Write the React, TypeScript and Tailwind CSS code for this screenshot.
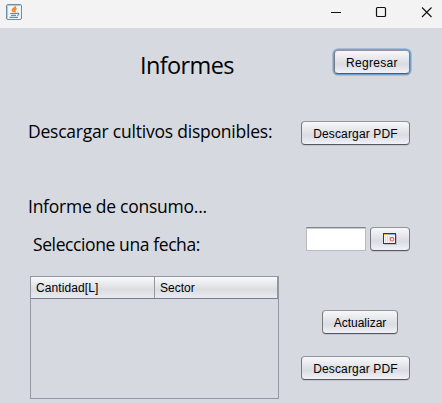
import type { ReactNode } from "react";
import { clsx } from "clsx";

function JavaIcon() {
  return (
    <svg width="16" height="16" viewBox="0 0 16 16" fill="none">
      <rect x="0.5" y="0.5" width="15" height="15" rx="1.5" fill="#f1f5f8" stroke="#6d8da4" />
      <path d="M1.5 14.5V1.5h13" stroke="#b4c8d6" />
      <path d="M9.400 2.200C9.800 4 6 4.600 6.500 6.400c.2.700.9 1 1.100 1.900M10.600 4.400C8.800 5.200 8.100 6 8.800 6.900c.3.500.2 1-.2 1.500" stroke="#f08a24" strokeWidth="1.700" />
      <path d="M4 9.500h6.800M5 11.400h5M10.800 9.300c2.800-.7 2.500 1.600.4 2.100M3.500 13.400h8.500" stroke="#6f8ca2" strokeWidth="1.200" />
    </svg>
  );
}

function CalendarIcon() {
  return (
    <svg width="14" height="12" viewBox="0 0 14 12" fill="none">
      <path d="M1.500 11.500h12V1.500" stroke="#c4bfc0" />
      <rect x="0.500" y="0.500" width="12" height="10" fill="#f4f4f4" stroke="#3c3838" />
      <path d="M1 1.500h4" stroke="#f5b13c" />
      <path d="M5 1.500h7" stroke="#8fa9d4" />
      <path d="M4.500 3v7M2.500 3v7M6.500 3v7" stroke="#dedede" />
      <circle cx="9" cy="6.200" r="1.800" stroke="#e86060" strokeWidth="1.100" />
    </svg>
  );
}

function Button({ children, className, focused }: { children: ReactNode; className: string; focused?: boolean }) {
  return (
    <button
      className={clsx(
        "flex h-6 shrink-0 items-center justify-center whitespace-nowrap rounded-[4px] border border-t-[#93959a] border-x-[#77797e] border-b-[#55585e] bg-linear-to-b from-[#f8f8fa] via-[#d9dce2] via-60% to-[#f0f2f8] text-[12px] leading-[14px] text-black",
        focused ? "shadow-[0_0_0_1.5px_#73a4d1]" : "shadow-[0_1px_0_#c3c6cd]",
        className,
      )}
    >
      {children}
    </button>
  );
}

export default function App() {
  return (
    <div className="flex h-[403px] w-[442px] flex-col overflow-hidden bg-[#d6d9e0] font-['Liberation_Sans',sans-serif] text-black">
      <header className="flex h-7 shrink-0 items-start bg-[#f3f3f3] pl-1.5 pt-1">
        <JavaIcon />
        <svg className="ml-auto" width="112" height="18" viewBox="330 4 112 18" fill="none" stroke="#111">
          <path d="M331 12.500h10" />
          <rect x="376.500" y="7.500" width="9" height="9" rx="1" strokeWidth="1.200" />
          <path d="M422 7.500l9.500 9.500M431.500 7.500L422 17" strokeWidth="1.100" />
        </svg>
      </header>
      <main className="flex grow flex-col pl-7 pr-8 pt-[22px]">
        <div className="flex h-6 items-start justify-between pl-[112px]">
          <h1 className="-mt-px whitespace-nowrap font-['Open_Sans',sans-serif] text-[23.5px] leading-8 tracking-[-0.6px]">Informes</h1>
          <Button focused className="w-[76px] pt-0.5 tracking-[0.3px]">Regresar</Button>
        </div>
        <div className="mt-[47px] flex h-6 items-start justify-between">
          <p className="-mt-0.5 whitespace-nowrap font-['Open_Sans',sans-serif] text-[17.5px] leading-6 tracking-[-0.22px]">Descargar cultivos disponibles:</p>
          <Button className="w-[109px] pt-0.5 tracking-[0.15px]">Descargar PDF</Button>
        </div>
        <p className="mt-[49px] whitespace-nowrap font-['Open_Sans',sans-serif] text-[17.5px] leading-6 tracking-[-0.25px]">Informe de consumo...</p>
        <div className="mt-[9px] flex h-6 items-start pl-[5px]">
          <p className="mt-[5px] whitespace-nowrap font-['Open_Sans',sans-serif] text-[17.5px] leading-6 tracking-[-0.4px]">Seleccione una fecha:</p>
          <input className="ml-auto h-6 w-[60px] border border-[#b8babe] border-t-[#85878b] bg-white shadow-[inset_0_1px_0_#c5c7ca] outline-none" />
          <Button className="ml-1 w-10"><CalendarIcon /></Button>
        </div>
        <div className="mt-[25px] flex justify-between pl-[2px]">
          <section className="h-[123px] w-[249px] border border-[#9297a1]">
            <div className="flex h-[22px] border-b border-[#777e8a] bg-linear-to-b from-[#f8f9fa] via-[#dbdde1] via-60% to-[#e8ebf0] text-[12px] leading-[23px]">
              <div className="h-[21px] w-[124px] border-r border-[#92959b] pl-[5px] tracking-[0.1px]">Cantidad[L]</div>
              <div className="h-[21px] grow border-r border-[#92959b] pl-[5px]">Sector</div>
            </div>
          </section>
          <div className="flex flex-col items-end pt-[34px]">
            <Button className="mr-3 w-[76px] pt-0.5">Actualizar</Button>
            <Button className="mt-[22px] w-[109px] pt-0.5 tracking-[0.15px]">Descargar PDF</Button>
          </div>
        </div>
      </main>
    </div>
  );
}
